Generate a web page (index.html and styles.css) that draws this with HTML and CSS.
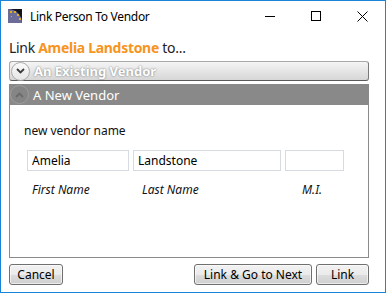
FILE: index.html
```html
<!DOCTYPE html>
<html lang="en">
<head>
    <meta charset="UTF-8">
    <title>Link Person To Vendor</title>
    <link rel="stylesheet" href="styles.css">
</head>
<body>
    <div class="window">
        <div class="titlebar">
            <svg class="app-icon" width="14" height="14" viewBox="0 0 14 14">
                <rect width="14" height="14" fill="#14141c"/>
                <path d="M0 0 A14 14 0 0 1 14 14 L0 14 Z" fill="#6c6c98"/>
                <rect x="2" y="2" width="2" height="2" fill="#e0b020"/>
                <rect x="6" y="2" width="2" height="2" fill="#e0b020"/>
                <rect x="9" y="5" width="2" height="2" fill="#e0b020"/>
                <rect x="11" y="9" width="2" height="2" fill="#e0b020"/>
                <rect x="3" y="7" width="1" height="1" fill="#e0b020"/>
            </svg>
            <span class="title">Link Person To Vendor</span>
            <div class="controls">
                <div class="control">
                    <svg width="10" height="10" viewBox="0 0 10 10"><path d="M0 5.5 H10" stroke="#000" stroke-width="1"/></svg>
                </div>
                <div class="control">
                    <svg width="10" height="10" viewBox="0 0 10 10"><rect x="0.5" y="0.5" width="9" height="9" fill="none" stroke="#000" stroke-width="1"/></svg>
                </div>
                <div class="control">
                    <svg width="11" height="11" viewBox="0 0 11 11"><path d="M0.5 0.5 L10.5 10.5 M10.5 0.5 L0.5 10.5" stroke="#000" stroke-width="1"/></svg>
                </div>
            </div>
        </div>

        <div class="content">
            <div class="heading">
                Link <span class="person">Amelia Landstone</span> to...
            </div>

            <div class="expander collapsed">
                <span class="toggle">
                    <svg width="9" height="6" viewBox="0 0 9 6"><path d="M1 1 L4.5 4.5 L8 1" fill="none" stroke="#3c3c3c" stroke-width="1.8"/></svg>
                </span>
                <span class="expander-title">An Existing Vendor</span>
            </div>

            <div class="section">
                <div class="expander open">
                    <span class="toggle">
                        <svg width="9" height="6" viewBox="0 0 9 6"><path d="M1 5 L4.5 1.5 L8 5" fill="none" stroke="#6a6a6a" stroke-width="1.8"/></svg>
                    </span>
                    <span class="expander-title">A New Vendor</span>
                </div>
                <div class="panel">
                    <p class="caption">new vendor name</p>
                    <div class="name-row">
                        <input class="first" type="text" value="Amelia">
                        <input class="last" type="text" value="Landstone">
                        <input class="middle" type="text" value="">
                    </div>
                    <div class="label-row">
                        <span class="first">First Name</span>
                        <span class="last">Last Name</span>
                        <span class="middle">M.I.</span>
                    </div>
                </div>
            </div>

            <div class="footer">
                <button class="button cancel">Cancel</button>
                <div class="actions">
                    <button class="button next">Link &amp; Go to Next</button>
                    <button class="button link">Link</button>
                </div>
            </div>
        </div>
    </div>
</body>
</html>
```

FILE: styles.css
```css
* {
    box-sizing: border-box;
    margin: 0;
    padding: 0;
    font-family: "Noto Sans", "Open Sans", sans-serif;
}

body {
    background-color: white;
}

.window {
    width: 386px;
    height: 293px;
    border: 1px solid #1a84d8;
    background-color: white;
    display: flex;
    flex-direction: column;
}

.titlebar {
    height: 30px;
    display: flex;
    align-items: center;
}

.app-icon {
    margin-left: 7px;
    margin-top: -1px;
}

.title {
    margin-left: 8px;
    font-size: 12px;
    letter-spacing: -0.3px;
    color: #000;
}

.controls {
    margin-left: auto;
    display: flex;
    height: 100%;
}

.control {
    width: 46px;
    height: 100%;
    display: flex;
    align-items: center;
    justify-content: center;
}

.content {
    flex: 1;
    display: flex;
    flex-direction: column;
    padding: 7px 16px 7px 8px;
}

.heading {
    height: 20px;
    line-height: 20px;
    font-size: 14px;
    letter-spacing: -0.3px;
    color: #222;
    margin-bottom: 3px;
}

.person {
    color: #f7941e;
    font-weight: bold;
}

.expander {
    height: 20px;
    display: flex;
    align-items: center;
    font-size: 13px;
    color: white;
}

.expander.collapsed {
    border: 1px solid #a8a8a8;
    border-bottom-color: #5a5a5a;
    border-right-color: #7a7a7a;
    border-radius: 3px;
    background: linear-gradient(#f5f5f5, #d6d6d6);
    margin-bottom: 3px;
}

.expander.collapsed .expander-title {
    font-weight: bold;
    text-shadow: 0 0 2px rgba(0, 0, 0, 0.55);
}

.expander.open {
    height: 21px;
    background-color: #898989;
}

.toggle {
    width: 19px;
    height: 19px;
    border-radius: 50%;
    display: flex;
    align-items: center;
    justify-content: center;
    margin: 0 4px 0 1px;
}

.collapsed .toggle {
    border: 1px solid #acacac;
    background: linear-gradient(#fafafa, #e6e6e6);
}

.open .toggle {
    border: 1px solid #9c9c9c;
    background-color: #858585;
}

.section {
    flex: 1;
    display: flex;
    flex-direction: column;
}

.panel {
    flex: 1;
    border: 1px solid #8a8a8a;
    border-top: none;
    padding: 18px 14px 0 14px;
}

.caption {
    font-size: 12px;
    line-height: 16px;
    color: #111;
    margin-bottom: 11px;
}

.name-row {
    display: flex;
    gap: 4px;
    padding-left: 3px;
}

input {
    height: 21px;
    border: 1px solid #d6dbe2;
    padding: 0 4px;
    font-size: 12px;
    color: #000;
    background-color: white;
}

input.first {
    width: 102px;
}

input.last {
    width: 148px;
}

input.middle {
    width: 59px;
}

.label-row {
    display: flex;
    margin-top: 11px;
    font-size: 12px;
    font-style: italic;
    color: #111;
    line-height: 16px;
}

.label-row .first {
    margin-left: 8px;
    width: 110px;
}

.label-row .last {
    width: 160px;
}

.footer {
    display: flex;
    justify-content: space-between;
    margin-top: 6px;
}

.actions {
    display: flex;
    gap: 4px;
}

.button {
    height: 21px;
    border: 1px solid #707070;
    border-radius: 3px;
    background: linear-gradient(#f2f2f2 0%, #ebebeb 50%, #dddddd 50%, #cfcfcf 100%);
    font-size: 12px;
    color: #000;
    box-shadow: inset 0 0 0 1px rgba(255, 255, 255, 0.6);
}

.cancel {
    width: 54px;
}

.next {
    width: 118px;
}

.link {
    width: 53px;
}
```
